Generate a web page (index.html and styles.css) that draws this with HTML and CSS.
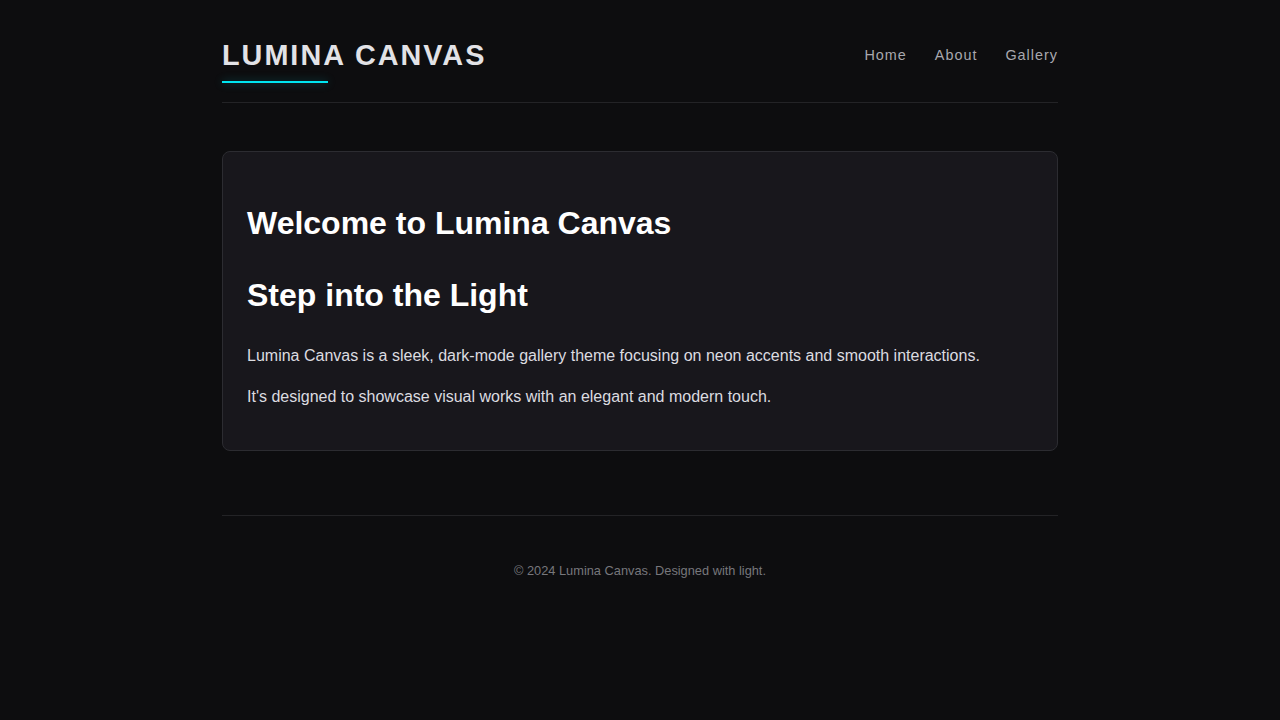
FILE: index.html
```html
<!DOCTYPE html>
<html lang="en">
<head>
<meta charset="utf-8">
<title>Lumina Canvas</title>
<link rel="stylesheet" href="styles.css">
</head>
<body>
<div class="container">
  <header class="site-header">
    <div class="logo">LUMINA CANVAS</div>
    <nav class="nav">
      <a href="#">Home</a>
      <a href="#">About</a>
      <a href="#">Gallery</a>
    </nav>
  </header>
  <main class="card">
    <h1>Welcome to Lumina Canvas</h1>
    <h2>Step into the Light</h2>
    <p>Lumina Canvas is a sleek, dark-mode gallery theme focusing on neon accents and smooth interactions.</p>
    <p>It's designed to showcase visual works with an elegant and modern touch.</p>
  </main>
  <footer class="site-footer">
    <p>© 2024 Lumina Canvas. Designed with light.</p>
  </footer>
</div>
</body>
</html>
```
FILE: styles.css
```css
html, body {
  margin: 0;
  padding: 0;
  background: #0d0d0f;
}
body {
  font-family: "Liberation Sans", Arial, sans-serif;
  line-height: 1.6;
  color: #d6d6da;
}
.container {
  max-width: 836px;
  margin: 0 auto;
}
.site-header {
  display: flex;
  justify-content: space-between;
  align-items: center;
  padding: 32px 0 24px;
  border-bottom: 1px solid #232326;
}
.logo {
  position: relative;
  font-size: 28.8px;
  font-weight: 700;
  letter-spacing: 2px;
  color: #e2e2e6;
}
.logo::after {
  content: "";
  position: absolute;
  left: 0;
  bottom: -5px;
  width: 40%;
  height: 2px;
  background: #00e5f0;
  box-shadow: 0 0 8px rgba(0, 229, 240, 0.35);
}
.nav {
  display: flex;
  gap: 28px;
}
.nav a {
  color: #a8a8ae;
  text-decoration: none;
  font-size: 14.4px;
  letter-spacing: 1px;
}
.card {
  display: block;
  margin-top: 48px;
  padding: 24px;
  background: #18171c;
  border: 1px solid #2c2c31;
  border-radius: 8px;
}
.card h1, .card h2 {
  font-size: 32px;
  font-weight: 700;
  margin: 0.67em 0;
  color: #ffffff;
}
.card p {
  font-size: 16px;
  margin: 16px 0;
  color: #dcdce0;
}
.site-footer {
  margin-top: 64px;
  border-top: 1px solid #232326;
  padding-top: 45px;
  text-align: center;
}
.site-footer p {
  margin: 0;
  font-size: 12.8px;
  color: #77777c;
}
```
